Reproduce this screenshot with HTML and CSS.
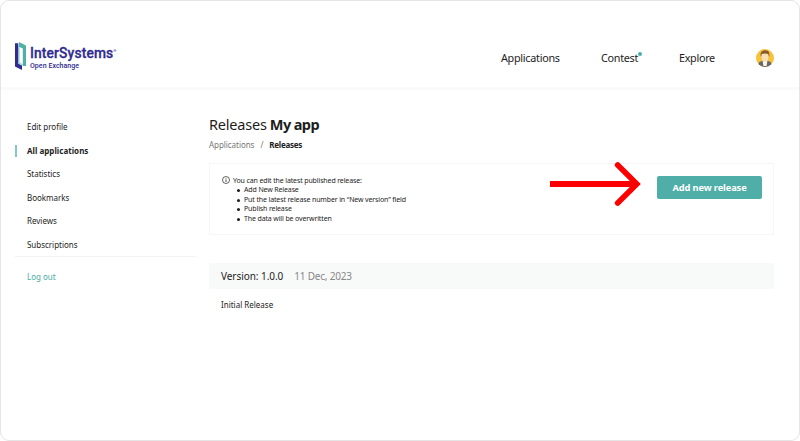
FILE: index.html
```
<!DOCTYPE html>
<html lang="en">
<head>
<meta charset="utf-8">
<title>Releases</title>
<link rel="stylesheet" href="styles.css">
</head>
<body>
<div class="window">
  <header class="header">
    <div class="brand">
      <svg class="mark" width="12" height="29" viewBox="0 0 12 29"><path d="M0 1.2L3.3 1.2V21.8L7 23.6V28L0 24.5Z" fill="#2f2b91"/><path d="M4 0L11 3.4V24H7.8V6.5L4 4.8Z" fill="#4fb0a8"/><path d="M4 4V21L7.8 22.8" fill="none" stroke="#4fb0a8" stroke-width=".7"/></svg>
      <div class="brand-text"><div class="brand-name">InterSystems<span class="reg">®</span></div><div class="brand-sub">Open Exchange</div></div>
    </div>
    <nav class="nav">
      <span class="n-apps">Applications</span>
      <span class="n-contest">Contest<i class="dot"></i></span>
      <span class="n-explore">Explore</span>
      <svg class="avatar" width="18" height="18" viewBox="0 0 18 18"><defs><clipPath id="c"><circle cx="9" cy="9" r="9"/></clipPath></defs><g clip-path="url(#c)"><path d="M0 0H18V18H0Z" fill="#f7c23c"/><path d="M2 18L3 13.3L7 11.5H11L15 13.3L16 18Z" fill="#65696e"/><path d="M6.5 11H11.5L10.6 17H7.4Z" fill="#fff4df"/><path d="M4.7 7.2Q3.8 1.4 9 1.3Q14.2 1.4 13.3 7.2Z" fill="#8a5a2c"/><path d="M5.5 5.2Q9 3.6 12.5 5.2V8.3Q12 12.6 9 12.7Q6 12.6 5.5 8.3Z" fill="#f8dfb5"/></g></svg>
    </nav>
  </header>
  <div class="body">
    <aside class="side">
      <a>Edit profile</a><a class="active"><span>All applications</span></a><a>Statistics</a><a>Bookmarks</a><a>Reviews</a><a>Subscriptions</a>
      <a class="logout">Log out</a>
    </aside>
    <main class="main">
      <h1><span class="h-light">Releases</span> <b>My app</b></h1>
      <div class="crumbs"><span>Applications</span><i>/</i><b>Releases</b></div>
      <section class="notice">
        <svg class="info" width="8" height="8" viewBox="0 0 8 8"><circle cx="4" cy="4" r="3.5" fill="none" stroke="#222" stroke-width=".7"/><path d="M4 3.4V6M4 1.9V2.6" stroke="#222" stroke-width=".8"/></svg>
        <div class="notice-text"><p>You can edit the latest published release:</p>
          <ul><li>Add New Release</li><li>Put the latest release number in “New version” field</li><li>Publish release</li><li>The data will be overwritten</li></ul>
        </div>
        <button>Add new release</button>
        <svg class="arrow" width="92" height="46" viewBox="0 0 92 46"><path d="M0 23H86" stroke="#f00" stroke-width="6"/><path d="M67.7 4L86.8 23L67.7 42" fill="none" stroke="#f00" stroke-width="5.6" stroke-linecap="round"/></svg>
      </section>
      <div class="version"><span class="v">Version: 1.0.0</span><span class="date">11 Dec, 2023</span></div>
      <p class="initial">Initial Release</p>
    </main>
  </div>
</div>
</body>
</html>
```
FILE: styles.css
```
*{box-sizing:border-box}
body{margin:0;background:#fff;font-family:"Noto Sans",sans-serif;color:#1d1d1d;white-space:nowrap}
.window{width:800px;height:441px;border:1px solid #e5e5e5;border-radius:9px;background:#fff;overflow:hidden}
.header{height:89px;padding:41px 25px 0 14px;display:flex;justify-content:space-between;border-bottom:3px solid #fafafa}
.brand{display:flex;gap:3px}
.brand-name{font:500 13.8px/16px Roboto,sans-serif;color:#2f2b91;letter-spacing:.13px;-webkit-text-stroke:.3px #2f2b91;padding-top:1px}
.reg{font-size:4px;vertical-align:6px;-webkit-text-stroke:0}
.brand-sub{font:500 7px/9px Roboto,sans-serif;color:#2f2b91;margin-top:1px;letter-spacing:.05px}
.nav{display:flex;font-size:10.8px;line-height:16px;padding-top:8px}
.n-apps{width:100px;letter-spacing:-.28px}
.n-contest{width:78px;position:relative;letter-spacing:-.3px}
.n-explore{width:77px;letter-spacing:-.3px}
.dot{position:absolute;left:37px;top:2px;width:4px;height:4px;border-radius:50%;background:#4aada5}
.avatar{margin-top:-1px}
.body{display:flex}
.side{width:181px;margin-left:14px;padding-top:25px;display:flex;flex-direction:column;font-size:8px;letter-spacing:-.02px}
.side a{height:23.5px;line-height:23px;padding-left:12px}
.side .active{font-weight:700;position:relative;letter-spacing:.02px}
.side .active::before{content:"";position:absolute;left:0;top:6px;width:2px;height:12px;background:#83c8c1}
.side .logout{color:#4aada5;border-top:1px solid #f3f3f3;height:40px;line-height:40px}
.main{width:565px;margin-left:13px}
h1{font-size:14.5px;line-height:20px;font-weight:400;margin:24px 0 0;letter-spacing:-.2px}
h1 b{letter-spacing:-.6px;margin-left:-.5px}
.crumbs{display:flex;font-size:8px;line-height:12px;margin-top:5px;color:#777;letter-spacing:-.05px}
.crumbs i{font-style:normal;margin:0 6px}
.crumbs b{color:#1d1d1d;letter-spacing:-.25px}
.notice{height:72px;margin-top:12px;border:1px solid #f6f6f6;display:flex;position:relative;padding:12px 11px 0 12px}
.info{margin-top:0}
.notice-text{font-size:7px;line-height:9.4px;margin-left:3px;flex:1;letter-spacing:-.13px}
.notice p,.notice ul{margin:0}
.notice ul{padding:0;list-style:none}
.notice li{position:relative;padding-left:11px}
.notice li::before{content:"";position:absolute;left:4px;top:4px;width:3px;height:3px;border-radius:50%;background:#1d1d1d}
button{width:105px;height:23px;border:0;border-radius:2px;background:#50aea8;color:#fff;font:700 9.3px/23px "Noto Sans",sans-serif;letter-spacing:-.12px;padding:0}
.arrow{position:absolute;left:340px;top:-3px}
.version{height:26px;margin-top:28px;background:#f8f9f9;padding-left:12px;display:flex;font-size:10px;line-height:26px}
.v{letter-spacing:-.05px}
.date{margin-left:11px;color:#888;letter-spacing:-.2px}
.initial{font-size:8px;line-height:12px;margin:10px 0 0 12px}
```
